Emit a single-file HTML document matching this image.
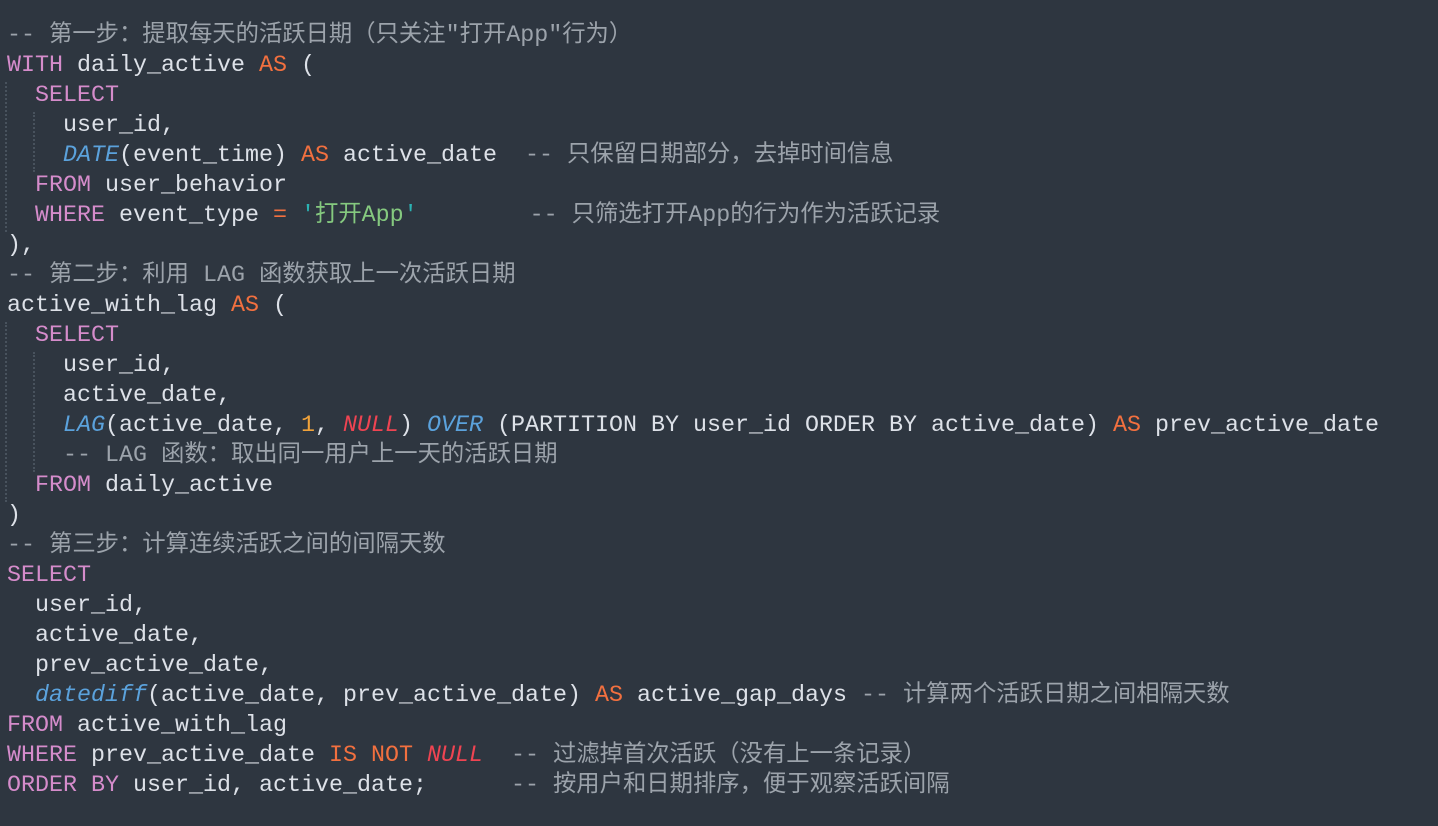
<!DOCTYPE html>
<html><head><meta charset="utf-8"><style>
html,body{margin:0;padding:0;background:#2e3640;width:1438px;height:826px;overflow:hidden}
pre{margin:0;position:absolute;left:7px;top:21px;font-family:"Liberation Mono","Noto Sans CJK SC",monospace;font-size:23.33px;line-height:30px;color:#dde1e8;white-space:pre}
.k{color:#d58ccb}.o{color:#f2703f}.f{color:#5ba2dc;font-style:italic}.c{color:#9ca3ab}.s{color:#85c97f}.q{color:#2bb3b3}.n{color:#ef4452;font-style:italic}.num{color:#f0a23a}
.g{position:absolute;border-left:2px dotted #48525d;width:0}
</style></head><body>
<div class="g" style="left:5px;top:82px;height:150px"></div>
<div class="g" style="left:33px;top:112px;height:60px"></div>
<div class="g" style="left:5px;top:322px;height:180px"></div>
<div class="g" style="left:33px;top:352px;height:120px"></div>
<pre><span class="c">-- 第一步：提取每天的活跃日期（只关注"打开App"行为）</span>
<span class="k">WITH</span> daily_active <span class="o">AS</span> (
  <span class="k">SELECT</span>
    user_id,
    <span class="f">DATE</span>(event_time) <span class="o">AS</span> active_date  <span class="c">-- 只保留日期部分，去掉时间信息</span>
  <span class="k">FROM</span> user_behavior
  <span class="k">WHERE</span> event_type <span class="o">=</span> <span class="q">'</span><span class="s">打开App</span><span class="q">'</span>        <span class="c">-- 只筛选打开App的行为作为活跃记录</span>
),
<span class="c">-- 第二步：利用 LAG 函数获取上一次活跃日期</span>
active_with_lag <span class="o">AS</span> (
  <span class="k">SELECT</span>
    user_id,
    active_date,
    <span class="f">LAG</span>(active_date, <span class="num">1</span>, <span class="n">NULL</span>) <span class="f">OVER</span> (PARTITION BY user_id ORDER BY active_date) <span class="o">AS</span> prev_active_date
    <span class="c">-- LAG 函数：取出同一用户上一天的活跃日期</span>
  <span class="k">FROM</span> daily_active
)
<span class="c">-- 第三步：计算连续活跃之间的间隔天数</span>
<span class="k">SELECT</span>
  user_id,
  active_date,
  prev_active_date,
  <span class="f">datediff</span>(active_date, prev_active_date) <span class="o">AS</span> active_gap_days <span class="c">-- 计算两个活跃日期之间相隔天数</span>
<span class="k">FROM</span> active_with_lag
<span class="k">WHERE</span> prev_active_date <span class="o">IS</span> <span class="o">NOT</span> <span class="n">NULL</span>  <span class="c">-- 过滤掉首次活跃（没有上一条记录）</span>
<span class="k">ORDER</span> <span class="k">BY</span> user_id, active_date;      <span class="c">-- 按用户和日期排序，便于观察活跃间隔</span>
</pre>
</body></html>
